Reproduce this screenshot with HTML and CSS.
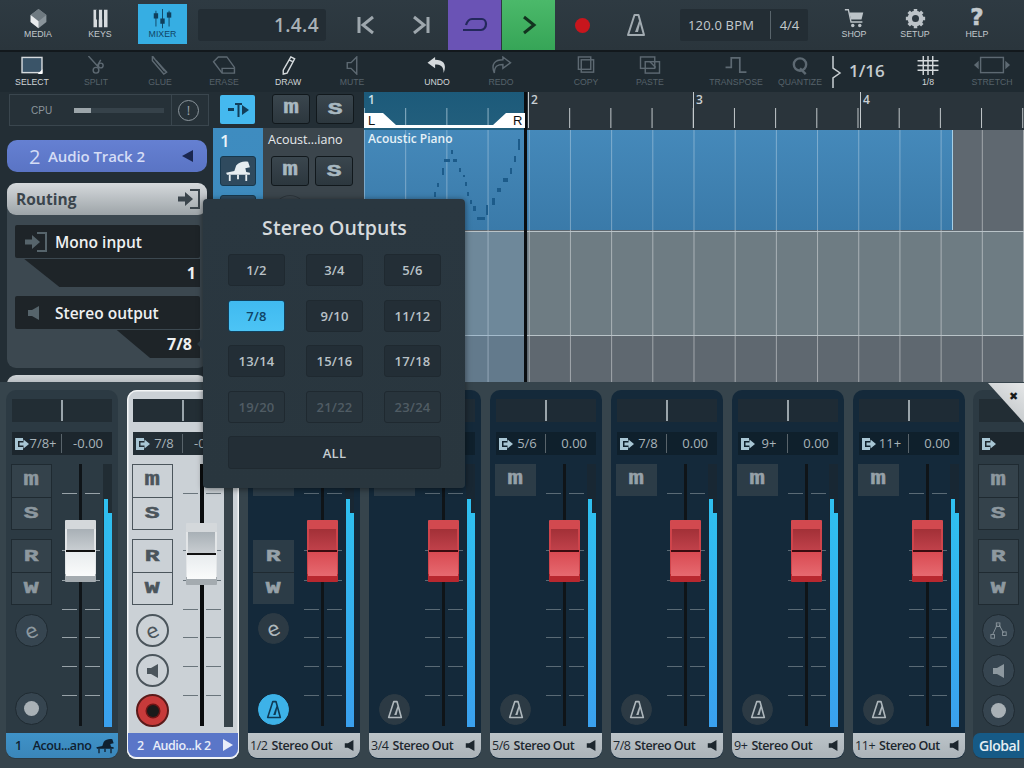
FILE: index.html
```html
<!DOCTYPE html>
<html lang="en">
<head>
<meta charset="utf-8">
<title>Mixer</title>
<link rel="stylesheet" href="styles.css">
</head>
<body>
<svg class="defs" width="0" height="0" aria-hidden="true">
  <symbol id="i-out" viewBox="0 0 15 14"><path d="M1 1h8v3H4v6h5v3H1z" fill="currentColor"/><path d="M5.500 5.500h4V2.500L15 7l-5.500 4.500v-3h-4z" fill="currentColor"/></symbol>
  <symbol id="i-in" viewBox="0 0 24 22"><path d="M13 2h9v18h-9" fill="none" stroke="currentColor" stroke-width="2"/><path d="M1 8.500h7V4l8 7-8 7v-4.500H1z" fill="currentColor"/></symbol>
  <symbol id="i-spk" viewBox="0 0 14 16"><path d="M1 5h4l7-4v14l-7-4H1z" fill="currentColor"/></symbol>
  <symbol id="i-piano" viewBox="0 0 30 24"><path d="M2 14l9-2 2-6c3-4 9-5 13-4l2 6-5 1 1 4 4 1v2H3z" fill="currentColor"/><path d="M5 16h2v7H5zM23 16h2v7h-2zM14 16h2v5h-2z" fill="currentColor"/></symbol>
  <symbol id="i-metro" viewBox="0 0 20 24"><path d="M8.500 2h4l5.500 20H2z" fill="none" stroke="currentColor" stroke-width="2" stroke-linejoin="round"/><path d="M9 19l4-11 1.500.5L12 19z" fill="currentColor"/></symbol>
  <symbol id="i-ticks" viewBox="0 0 41 262"><g stroke="currentColor" stroke-width="1"><path d="M2 29.500h15M25 29.500h15M2 86.500h15M25 86.500h15M2 116.500h15M25 116.500h15M2 145.500h15M25 145.500h15M2 173.500h15M25 173.500h15M2 202.500h15M25 202.500h15M2 231.500h15M25 231.500h15"/></g></symbol>
</svg>

<div class="app">
  <header class="topbar">
    <div class="tb-btn w-media"><svg class="ic" viewBox="0 0 24 24"><path d="M12 1l9 7v8l-9 7-9-7V8z" fill="#8a949b"/><path d="M3 8l9 7 9-7-9-7z" fill="#6f7a81"/><path d="M3 8v8l9 7v-8z" fill="#e8ebed"/></svg><span>MEDIA</span></div>
    <div class="tb-btn w-keys"><svg class="ic" viewBox="0 0 24 24"><path d="M4 2h4v20H4zM10 2h4v20h-4zM16 2h4v20h-4z" fill="#d7dbde"/><path d="M7 2h3v11H7zM14 2h2v11h-2z" fill="#2c3840"/></svg><span>KEYS</span></div>
    <div class="tb-btn mixer-on"><svg class="ic" viewBox="0 0 24 24" fill="#0f3f5c"><path d="M4 3h1v18H4zM11.500 1h1v22h-1zM19 3h1v18h-1z"/><rect x="2" y="6" width="5" height="6"/><rect x="9.500" y="12" width="5" height="6"/><rect x="17" y="5" width="5" height="6"/></svg><span>MIXER</span></div>
    <div class="display">1.4.4</div>
    <div class="tp w-prev"><svg viewBox="0 0 20 20" width="20" height="20"><path d="M3 2v16M17 2L7 10l10 8" fill="none" stroke="#9ea7ad" stroke-width="3"/></svg></div>
    <div class="tp w-next"><svg viewBox="0 0 20 20" width="20" height="20"><path d="M17 2v16M3 2l10 8-10 8" fill="none" stroke="#9ea7ad" stroke-width="3"/></svg></div>
    <div class="tp loop"><svg viewBox="0 0 26 16" width="26" height="16"><path d="M4 8c1-3 3-6 6-6h10c2 0 4 2 4 5s-2 6-5 6H1" fill="none" stroke="#23285c" stroke-width="2.200"/></svg></div>
    <div class="tp play"><svg viewBox="0 0 16 20" width="16" height="22"><path d="M3 2l10 8-10 8" fill="none" stroke="#12331f" stroke-width="3"/></svg></div>
    <div class="tp w-rec"><span class="recdot"></span></div>
    <div class="tp w-met"><svg class="met" width="20" height="24"><use href="#i-metro"/></svg></div>
    <div class="bpm"><span class="bpm-v">120.0 BPM</span><span class="bpm-s">4/4</span></div>
    <div class="tb-btn w-shop"><svg class="ic" viewBox="0 0 24 24"><path d="M1 2h4l3 14h13" fill="none" stroke="#bcc3c8" stroke-width="1.500"/><path d="M6 5h16l-2 8H8z" fill="#bcc3c8"/><circle cx="10" cy="20" r="2" fill="#bcc3c8"/><circle cx="18" cy="20" r="2" fill="#bcc3c8"/></svg><span>SHOP</span></div>
    <div class="tb-btn w-setup"><svg class="ic" viewBox="0 0 24 24"><circle cx="12" cy="12" r="6.500" fill="none" stroke="#bcc3c8" stroke-width="5"/><path d="M12 1v22M1 12h22M4.200 4.200l15.600 15.600M19.800 4.200L4.200 19.800" stroke="#bcc3c8" stroke-width="4" stroke-dasharray="4 14"/></svg><span>SETUP</span></div>
    <div class="tb-btn w-help"><span class="q">?</span><span>HELP</span></div>
  </header>

  <nav class="toolbar">
    <div class="tool on"><svg viewBox="0 0 24 20"><rect x="1.500" y="1.500" width="21" height="16" fill="#3a5468" stroke="#d5dadd" stroke-width="1.500"/><path d="M23 14v5h-5z" fill="#fff"/></svg><span>SELECT</span></div>
    <div class="tool"><svg viewBox="0 0 24 20" fill="none" stroke="#5d6972" stroke-width="1.500"><path d="M4 0l11 12M17 4l-4 7"/><circle cx="12" cy="15" r="3"/><circle cx="17" cy="10" r="2.500"/></svg><span>SPLIT</span></div>
    <div class="tool"><svg viewBox="0 0 24 20" fill="none" stroke="#5d6972" stroke-width="1.500"><path d="M4 0l3 4 12 13-3 2L4 5z"/><path d="M8 5l9 11"/></svg><span>GLUE</span></div>
    <div class="tool"><svg viewBox="0 0 24 20" fill="none" stroke="#5d6972" stroke-width="1.500"><path d="M1 6l5-5h9l8 11v6H10z"/><path d="M10 18v-5h13"/></svg><span>ERASE</span></div>
    <div class="tool on"><svg viewBox="0 0 24 20" fill="none" stroke="#d5dadd" stroke-width="1.500"><path d="M15 1l4 2-8 15-4 1v-4z"/><path d="M13 4l4 2"/></svg><span>DRAW</span></div>
    <div class="tool"><svg viewBox="0 0 24 20" fill="none" stroke="#5d6972" stroke-width="1.500"><path d="M7 7h4l6-6v18l-6-6H7z"/></svg><span>MUTE</span></div>
    <div class="tool m-undo on"><svg viewBox="0 0 24 20"><path d="M10 1L2 7l8 6V9c5 0 9 1 9 9 4-10-1-14-9-14z" fill="#d5dadd"/></svg><span>UNDO</span></div>
    <div class="tool"><svg viewBox="0 0 24 20"><path d="M14 1l8 6-8 6V9c-5 0-9 1-9 9C1 8 6 4 14 4z" fill="none" stroke="#5d6972" stroke-width="1.500"/></svg><span>REDO</span></div>
    <div class="tool m-copy"><svg viewBox="0 0 24 20" fill="none" stroke="#5d6972" stroke-width="1.500"><rect x="4" y="1" width="13" height="13"/><rect x="7" y="4" width="13" height="13"/></svg><span>COPY</span></div>
    <div class="tool"><svg viewBox="0 0 24 20" fill="none" stroke="#5d6972" stroke-width="1.500"><rect x="2" y="1" width="15" height="12"/><rect x="7" y="6" width="15" height="12"/><path d="M12 6l6 6"/></svg><span>PASTE</span></div>
    <div class="tool m-trans"><svg viewBox="0 0 24 20" fill="none" stroke="#5d6972" stroke-width="1.800"><path d="M1 12h6V2h9v15h7"/></svg><span>TRANSPOSE</span></div>
    <div class="tool"><svg viewBox="0 0 24 20" fill="none" stroke="#5d6972" stroke-width="2.500"><circle cx="12" cy="9" r="6.500"/><path d="M12 13l6 6"/></svg><span>QUANTIZE</span></div>
    <svg class="brace" viewBox="0 0 10 32" width="10" height="32"><path d="M1 0v12l7 5-7 5v10" fill="none" stroke="#c9cfd3" stroke-width="1.500"/></svg>
    <div class="snap">1/16</div>
    <div class="tool on m-grid"><svg viewBox="0 0 24 20" fill="none" stroke="#d5dadd" stroke-width="1.500"><path d="M7 0v20M12 0v20M17 0v20M1 5h22M1 10h22M1 15h22"/></svg><span>1/8</span></div>
    <div class="tool"><svg viewBox="0 0 38 20"><rect x="7" y="1.500" width="24" height="16" fill="none" stroke="#5d6972" stroke-width="1.500"/><path d="M5 5v9L0 9.500zM33 5v9l5-4.500z" fill="#5d6972"/></svg><span>STRETCH</span></div>
  </nav>

  <main class="work">
    <aside class="insp">
      <div class="cpu"><span class="cpu-l">CPU</span><span class="cpu-b"><i></i></span><span class="cpu-d"></span><span class="cpu-w">!</span></div>
      <div class="trackpill"><span class="tp-n">2</span><span class="tp-t">Audio Track 2</span><span class="tp-a"></span></div>
      <section class="panel">
        <div class="panel-h"><span>Routing</span><svg width="24" height="22"><use href="#i-in"/></svg></div>
        <div class="rt-row"><svg class="rt-ic" width="24" height="22"><use href="#i-in"/></svg><span>Mono input</span></div>
        <div class="rt-sub rt-a">1</div>
        <div class="rt-row r2"><svg class="rt-ic sp" width="14" height="16"><use href="#i-spk"/></svg><span>Stereo output</span></div>
        <div class="rt-sub rt-b">7/8</div>
      </section>
      <div class="panel-next"></div>
    </aside>

    <section class="trk">
      <div class="trk-top">
        <div class="btn-blue"><svg viewBox="0 0 24 20" width="26" height="20"><path d="M2 8h6v3H2zM11.500 4h2v13h-2zM9 3h7v2H9z" fill="#123e5a"/><path d="M16 5l7 5-7 5z" fill="#123e5a"/></svg></div>
        <div class="btn-dk l1"><span class="gm">m</span></div>
        <div class="btn-dk"><span>S</span></div>
      </div>
      <div class="trk-row">
        <div class="trk-num"><span>1</span><div class="btn-ins"><svg width="28" height="22"><use href="#i-piano"/></svg></div><div class="btn-ins off"></div></div>
        <div class="trk-main"><span class="trk-name">Acoust...iano</span><div class="trk-ms"><div class="btn-dk"><span class="gm">m</span></div><div class="btn-dk"><span>S</span></div></div><div class="trk-knob"></div></div>
      </div>
    </section>

    <section class="arr">
      <div class="ruler">
        <div class="ruler-sel"><span class="bar b1">1</span>
          <svg class="loc" viewBox="0 0 161 16" width="161" height="16"><path d="M0 1h19l13 12h97l13-12h19v15H0z" fill="#fff"/><text x="4" y="13" class="loc-t">L</text><text x="149" y="13" class="loc-t">R</text></svg>
        </div>
        <div class="ruler-rest"><span class="bar b2">2</span><span class="bar b3">3</span><span class="bar b4">4</span></div>
      </div>
      <div class="lanes">
        <div class="lane l-a"><div class="clip"><span>Acoustic Piano</span>
          <svg class="notes" viewBox="0 0 160 100" width="160" height="100"><g fill="#1c5b8a"><rect x="87" y="20" width="2" height="4"/><rect x="80" y="29" width="6" height="3"/><rect x="89" y="29" width="4" height="3"/><rect x="78" y="38" width="2" height="7"/><rect x="73" y="53" width="2" height="4"/><rect x="70" y="62" width="2" height="5"/><rect x="95" y="38" width="2" height="4"/><rect x="99" y="45" width="2" height="2"/><rect x="101" y="52" width="2" height="4"/><rect x="103" y="62" width="2" height="4"/><rect x="106" y="70" width="2" height="4"/><rect x="109" y="76" width="3" height="5"/><rect x="113" y="87" width="8" height="3"/><rect x="122" y="75" width="2" height="10"/><rect x="128" y="68" width="3" height="7"/><rect x="133" y="58" width="4" height="4"/><rect x="139" y="48" width="5" height="4"/><rect x="146" y="38" width="2" height="6"/><rect x="150" y="26" width="2" height="6"/><rect x="154" y="9" width="2" height="11"/></g></svg>
        </div></div>
        <div class="lane l-b"></div>
        <div class="lane l-c"></div>
        <div class="sel-tint"></div>
      </div>
      <div class="playhead"></div>
    </section>
  </main>

  <section class="mixer">
    <article class="ch dark">
      <div class="pan"><i></i></div>
      <div class="route"><svg width="15" height="14"><use href="#i-out"/></svg><span class="rn">7/8+</span><span class="rv">-0.00</span></div>
      <div class="body">
        <div class="ctl">
          <div class="grp"><div class="k"><span class="gm">m</span></div><div class="k"><span>S</span></div></div>
          <div class="grp"><div class="k"><span>R</span></div><div class="k"><span>W</span></div></div>
          <div class="rnd"><em>e</em></div>
          <div class="rnd last"><i class="dot"></i></div>
        </div>
        <div class="strip"><svg class="ticks" width="41" height="262"><use href="#i-ticks"/></svg><i class="rail"></i><div class="cap"></div></div>
        <div class="meter"><i class="m1"></i><i class="m2"></i></div>
      </div>
      <div class="foot f-blue"><b>1</b><span>Acou...ano</span><svg width="20" height="16"><use href="#i-piano"/></svg></div>
    </article>

    <article class="ch sel">
      <div class="pan"><i></i></div>
      <div class="route"><svg width="15" height="14"><use href="#i-out"/></svg><span class="rn">7/8</span><span class="rv">-0.00</span></div>
      <div class="body">
        <div class="ctl">
          <div class="grp"><div class="k"><span class="gm">m</span></div><div class="k"><span>S</span></div></div>
          <div class="grp"><div class="k"><span>R</span></div><div class="k"><span>W</span></div></div>
          <div class="rnd"><em>e</em></div>
          <div class="rnd"><svg width="14" height="16"><use href="#i-spk"/></svg></div>
          <div class="rnd rec"><i class="dot"></i></div>
        </div>
        <div class="strip"><svg class="ticks" width="41" height="262"><use href="#i-ticks"/></svg><i class="rail"></i><div class="cap low"></div></div>
        <div class="meter"></div>
      </div>
      <div class="foot f-sel"><b>2</b><span>Audio...k 2</span><i class="tri"></i></div>
    </article>

    <article class="ch out">
      <div class="pan"><i></i></div>
      <div class="route"></div>
      <div class="body">
        <div class="ctl">
          <div class="grp flat"><div class="k"><span class="gm">m</span></div></div>
          <div class="grp flat rw"><div class="k"><span>R</span></div><div class="k"><span>W</span></div></div>
          <div class="rnd"><em>e</em></div>
          <div class="rnd last on"><svg width="16" height="19"><use href="#i-metro"/></svg></div>
        </div>
        <div class="strip"><svg class="ticks" width="41" height="262"><use href="#i-ticks"/></svg><i class="rail"></i><div class="cap red"></div></div>
        <div class="meter"><i class="m1"></i><i class="m2"></i></div>
      </div>
      <div class="foot f-grey"><b>1/2</b><span>Stereo Out</span><svg width="11" height="13"><use href="#i-spk"/></svg></div>
    </article>

    <article class="ch out">
      <div class="pan"><i></i></div>
      <div class="route"></div>
      <div class="body">
        <div class="ctl">
          <div class="grp flat"><div class="k"><span class="gm">m</span></div></div>
          <div class="rnd last"><svg width="16" height="19"><use href="#i-metro"/></svg></div>
        </div>
        <div class="strip"><svg class="ticks" width="41" height="262"><use href="#i-ticks"/></svg><i class="rail"></i><div class="cap red"></div></div>
        <div class="meter"><i class="m1"></i><i class="m2"></i></div>
      </div>
      <div class="foot f-grey"><b>3/4</b><span>Stereo Out</span><svg width="11" height="13"><use href="#i-spk"/></svg></div>
    </article>

    <article class="ch out">
      <div class="pan"><i></i></div>
      <div class="route"><svg width="15" height="14"><use href="#i-out"/></svg><span class="rn">5/6</span><span class="rv">0.00</span></div>
      <div class="body">
        <div class="ctl">
          <div class="grp flat"><div class="k"><span class="gm">m</span></div></div>
          <div class="rnd last"><svg width="16" height="19"><use href="#i-metro"/></svg></div>
        </div>
        <div class="strip"><svg class="ticks" width="41" height="262"><use href="#i-ticks"/></svg><i class="rail"></i><div class="cap red"></div></div>
        <div class="meter"><i class="m1"></i><i class="m2"></i></div>
      </div>
      <div class="foot f-grey"><b>5/6</b><span>Stereo Out</span><svg width="11" height="13"><use href="#i-spk"/></svg></div>
    </article>

    <article class="ch out">
      <div class="pan"><i></i></div>
      <div class="route"><svg width="15" height="14"><use href="#i-out"/></svg><span class="rn">7/8</span><span class="rv">0.00</span></div>
      <div class="body">
        <div class="ctl">
          <div class="grp flat"><div class="k"><span class="gm">m</span></div></div>
          <div class="rnd last"><svg width="16" height="19"><use href="#i-metro"/></svg></div>
        </div>
        <div class="strip"><svg class="ticks" width="41" height="262"><use href="#i-ticks"/></svg><i class="rail"></i><div class="cap red"></div></div>
        <div class="meter"><i class="m1"></i><i class="m2"></i></div>
      </div>
      <div class="foot f-grey"><b>7/8</b><span>Stereo Out</span><svg width="11" height="13"><use href="#i-spk"/></svg></div>
    </article>

    <article class="ch out">
      <div class="pan"><i></i></div>
      <div class="route"><svg width="15" height="14"><use href="#i-out"/></svg><span class="rn">9+</span><span class="rv">0.00</span></div>
      <div class="body">
        <div class="ctl">
          <div class="grp flat"><div class="k"><span class="gm">m</span></div></div>
          <div class="rnd last"><svg width="16" height="19"><use href="#i-metro"/></svg></div>
        </div>
        <div class="strip"><svg class="ticks" width="41" height="262"><use href="#i-ticks"/></svg><i class="rail"></i><div class="cap red"></div></div>
        <div class="meter"><i class="m1"></i><i class="m2"></i></div>
      </div>
      <div class="foot f-grey"><b>9+</b><span>Stereo Out</span><svg width="11" height="13"><use href="#i-spk"/></svg></div>
    </article>

    <article class="ch out">
      <div class="pan"><i></i></div>
      <div class="route"><svg width="15" height="14"><use href="#i-out"/></svg><span class="rn">11+</span><span class="rv">0.00</span></div>
      <div class="body">
        <div class="ctl">
          <div class="grp flat"><div class="k"><span class="gm">m</span></div></div>
          <div class="rnd last"><svg width="16" height="19"><use href="#i-metro"/></svg></div>
        </div>
        <div class="strip"><svg class="ticks" width="41" height="262"><use href="#i-ticks"/></svg><i class="rail"></i><div class="cap red"></div></div>
        <div class="meter"><i class="m1"></i><i class="m2"></i></div>
      </div>
      <div class="foot f-grey"><b>11+</b><span>Stereo Out</span><svg width="11" height="13"><use href="#i-spk"/></svg></div>
    </article>

    <article class="ch dark global">
      <div class="pan"><i></i></div>
      <div class="route"><svg width="15" height="14"><use href="#i-out"/></svg></div>
      <div class="body">
        <div class="ctl">
          <div class="grp"><div class="k"><span class="gm">m</span></div><div class="k"><span>S</span></div></div>
          <div class="grp"><div class="k"><span>R</span></div><div class="k"><span>W</span></div></div>
          <div class="rnd"><svg viewBox="0 0 20 20" width="18" height="18"><path d="M8 3L3 14M10 3l5 9" fill="none" stroke="currentColor"/><rect x="7" y="1" width="4" height="4" fill="none" stroke="currentColor"/><rect x="1" y="14" width="4" height="4" fill="none" stroke="currentColor"/><rect x="14" y="11" width="4" height="4" fill="none" stroke="currentColor"/></svg></div>
          <div class="rnd"><svg width="14" height="16"><use href="#i-spk"/></svg></div>
          <div class="rnd"><i class="dot"></i></div>
        </div>
      </div>
      <div class="foot f-global"><span>Global</span></div>
    </article>

    <div class="close-tab"><span>&#10006;</span></div>
  </section>

  <div class="popup">
    <h2>Stereo Outputs</h2>
    <div class="po-grid">
      <div class="po">1/2</div><div class="po">3/4</div><div class="po">5/6</div>
      <div class="po act">7/8</div><div class="po">9/10</div><div class="po">11/12</div>
      <div class="po">13/14</div><div class="po">15/16</div><div class="po">17/18</div>
      <div class="po dis">19/20</div><div class="po dis">21/22</div><div class="po dis">23/24</div>
      <div class="po all">ALL</div>
    </div>
  </div>
</div>
</body>
</html>
```

FILE: styles.css
```css
* { box-sizing: border-box; }
html, body { margin: 0; padding: 0; }
body { width: 1024px; height: 768px; overflow: hidden; background: #2b363d; font-family: "Open Sans", sans-serif; }
.defs { position: absolute; }
.app { position: relative; width: 1024px; height: 768px; display: flex; flex-direction: column; overflow: hidden; }

/* top bar */
.topbar { height: 52px; flex: none; display: flex; align-items: flex-start; background: linear-gradient(#2e3a42, #2a353c); border-bottom: 2px solid #12181c; }
.tb-btn { display: flex; flex-direction: column; align-items: center; height: 50px; padding-top: 8px; font: 8.800px "Liberation Sans", sans-serif; color: #c2c9cd; }
.tb-btn .ic { width: 21px; height: 21px; flex: none; }
.tb-btn span { line-height: 11px; }
.w-media { width: 76px; }
.w-keys { width: 48px; margin-right: 14px; }
.mixer-on { width: 49px; height: 40px; margin: 4px 11px 0 0; padding-top: 4px; background: #36aee3; color: #0f4566; }
.display { width: 128px; height: 32px; margin-top: 9px; padding-right: 7px; background: #232d34; border-radius: 3px; text-align: right; font-size: 19px; font-weight: 600; line-height: 32px; color: #a9b1b6; letter-spacing: .4px; }
.tp { height: 50px; display: flex; align-items: center; justify-content: center; flex: none; }
.w-prev { width: 54px; margin-left: 13px; }
.w-next { width: 55px; }
.loop { width: 53px; margin-right: 1px; background: #6a53b5; }
.play { width: 53px; background: linear-gradient(#4bb96a, #36a557); }
.w-rec { width: 54px; }
.recdot { width: 15px; height: 15px; border-radius: 50%; background: #c8161d; }
.w-met { width: 54px; }
.met { color: #a2abb1; }
.bpm { width: 128px; height: 32px; margin: 9px 17px 0; display: flex; align-items: center; background: #232d34; border-radius: 2px; font-size: 13px; font-weight: 500; color: #c3cacd; }
.bpm-v { width: 90px; padding-right: 8px; text-align: center; letter-spacing: .2px; white-space: nowrap; }
.bpm-s { flex: 1; text-align: center; border-left: 1px solid #59646b; line-height: 28px; }
.w-shop { width: 60px; margin-left: -1px; }
.w-setup { width: 62px; }
.w-help { width: 62px; padding-top: 5px; }
.tb-btn .q { font: 700 23px/24px "DejaVu Sans", sans-serif; height: 24px; color: #c2c9cd; -webkit-text-stroke: .6px currentColor; }

/* tool bar */
.toolbar { height: 40px; flex: none; display: flex; background: #1f2a31; }
.tool { width: 64px; flex: none; display: flex; flex-direction: column; align-items: center; padding-top: 4px; font: 8.700px "Liberation Sans", sans-serif; color: #56626a; }
.tool svg { height: 19px; width: 24px; flex: none; margin-bottom: 2px; }
.tool span { line-height: 11px; white-space: nowrap; }
.tool.on { color: #d0d5d8; }
.tool:last-child svg { width: 38px; }
.m-undo { margin-left: 21px; }
.m-copy { margin-left: 21px; }
.m-trans { margin-left: 22px; }
.brace { flex: none; margin: 4px 0 0 0; }
.snap { width: 54px; flex: none; padding: 8px 0 0 7px; font-size: 17px; font-weight: 600; line-height: 22px; color: #c4cbcf; }
.m-grid { color: #c4cbcf; }

/* main */
.work { height: 290px; flex: none; display: flex; background: #232e35; overflow: hidden; }
.insp { width: 213px; flex: none; padding: 2px 6px 0 7px; display: flex; flex-direction: column; }
.cpu { height: 32px; flex: none; margin: 0 -2px 0 2px; display: flex; align-items: center; border: 1px solid #3a464e; background: #263138; }
.cpu-l { width: 64px; padding-left: 21px; font: 10px "Liberation Sans", sans-serif; color: #8b959c; }
.cpu-b { width: 90px; height: 5px; background: #36424a; }
.cpu-b i { display: block; width: 17px; height: 5px; background: #9ca5aa; }
.cpu-d { width: 1px; height: 30px; margin-left: 7px; background: #3a464e; }
.cpu-w { width: 21px; height: 21px; margin-left: 6px; border: 1.500px solid #8b959c; border-radius: 50%; text-align: center; font-size: 13px; line-height: 18px; color: #9aa3a8; }
.trackpill { height: 32px; flex: none; margin-top: 14px; display: flex; align-items: center; border-radius: 10px; background: linear-gradient(#6580d2, #5a74c4); padding-left: 22px; }
.tp-n { font-size: 20px; color: #d4dcf5; width: 19px; }
.tp-t { font-size: 15px; font-weight: 600; color: #d4dcf5; letter-spacing: -.1px; flex: 1; white-space: nowrap; }
.tp-a { width: 0; height: 0; margin-right: 14px; border: 6px solid transparent; border-left: 0; border-right: 11px solid #1a2750; }
.panel { height: 185px; margin-top: 11px; padding: 0 7px 0 8px; border-radius: 9px; background: #3c4850; flex: none; }
.panel-h { height: 32px; margin: 0 -7px 0 -8px; padding: 0 7px 0 9px; display: flex; align-items: center; justify-content: space-between; border-radius: 9px; background: linear-gradient(#d5d9dc, #9da4a8); color: #3b454c; font-size: 15.500px; font-weight: 700; }
.panel-h svg { margin-right: -1px; }
.rt-row { height: 33px; margin-top: 10px; display: flex; align-items: center; padding-left: 9px; background: #1e2428; border-radius: 2px; color: #eef0f1; font-size: 15.500px; font-weight: 600; white-space: nowrap; }
.rt-row span { margin-left: 7px; }
.rt-ic { color: #56646b; flex: none; }
.rt-ic.sp { margin: 0 7px 0 3px; }
.rt-row.r2 { margin-top: 9px; }
.rt-sub { height: 28px; margin-top: 1px; padding-right: 4px; text-align: right; background: #1e2428; color: #eef0f1; font-size: 16px; font-weight: 700; line-height: 29px; }
.rt-a { clip-path: polygon(5% 0, 100% 0, 100% 100%, 24% 100%); }
.rt-b { clip-path: polygon(55% 0, 100% 0, 100% 100%, 73% 100%); padding-right: 8px; }
.panel-next { height: 14px; margin-top: 7px; border-radius: 9px 9px 0 0; background: linear-gradient(#cdd2d5, #a8aeb2); flex: none; }

.trk { width: 151px; flex: none; display: flex; flex-direction: column; }
.trk-top { height: 36px; flex: none; display: flex; padding: 2px 0 0 7px; }
.btn-blue { width: 35px; height: 29px; margin-top: 1px; display: flex; align-items: center; justify-content: center; background: #45b9ef; border-radius: 2px; }
.btn-dk { width: 38px; height: 30px; margin-left: 6px; background: linear-gradient(#3a464e, #2c373e); border: 1.500px solid #11181c; border-radius: 3px; display: flex; align-items: center; justify-content: center; font: 700 17px/1 "Liberation Mono", monospace; color: #a8b8c0; }
.btn-dk span, .k span { display: inline-block; transform: scaleX(1.45); -webkit-text-stroke: .5px currentColor; }
.btn-dk .gm, .k .gm { font-size: 21px; transform: scaleX(1.22); margin-top: -4px; }
.btn-dk.l1 { margin-left: 17px; }
.trk-row { flex: 1; display: flex; }
.trk-num { width: 50px; flex: none; padding: 3px 0 0 7px; background: linear-gradient(#3e8cc0, #3d88b9); color: #e9f3f9; font-size: 17px; font-weight: 600; line-height: 20px; }
.trk-num span { display: block; height: 25px; }
.btn-ins { width: 36px; height: 30px; border-radius: 3px; border: 1.500px solid #17384d; background: #2f4a5e; color: #e6edf1; display: flex; align-items: center; justify-content: center; margin-bottom: 9px; }
.trk-main { flex: 1; padding-left: 2px; background: #3b454c; }
.trk-name { display: block; height: 28px; padding: 3px 0 0 3px; font-size: 12.500px; font-weight: 500; color: #e6eaec; line-height: 18px; white-space: nowrap; }
.trk-ms { display: flex; }
.trk-ms .btn-dk:first-child { margin-left: 6px; }
.trk-knob { width: 34px; height: 34px; margin: 9px 0 0 8px; border-radius: 50%; border: 1.500px solid #2c353b; }

.arr { position: relative; width: 660px; flex: none; }
.ruler { height: 38px; display: flex; background: #2a343b; }
.ruler-sel { position: relative; width: 161px; flex: none; background: linear-gradient(#1c5a7a, #235f7d); }
.ruler-rest { position: relative; flex: 1; }
.ruler-rest::before, .ruler-sel::before { content: ""; position: absolute; left: 0; right: 0; bottom: 2px; height: 20px; background-size: 41.200px 100%; }
.ruler-sel::before { background-image: linear-gradient(90deg, #8fb3c6 1px, transparent 1px); }
.ruler-rest::before { left: 3px; background-image: linear-gradient(90deg, #c4cacd 1px, transparent 1px); }
.bar { position: absolute; top: 0; font: 600 12px/16px "Open Sans", sans-serif; color: #c9d0d4; }
.bar::after { content: ""; position: absolute; top: 0; left: -3px; width: 1px; height: 36px; background: #c4cacd; }
.b1::after { display: none; }
.b1 { left: 4px; color: #cfe0ea; }
.b2 { left: 6px; }
.b3 { left: 171px; }
.b4 { left: 338px; }
.loc { position: absolute; left: 0; bottom: 2px; z-index: 1; }
.loc-t { font: 13px "Liberation Sans", sans-serif; fill: #111; }
.lanes { position: relative; height: 252px; }
.lane { background-size: 41.200px 100%; background-image: linear-gradient(90deg, rgba(255,255,255,.42) 1px, transparent 1px); }
.l-a { height: 102px; background-color: #5f6870; border-bottom: 1px solid #b9c3c8; }
.l-b { height: 104px; background-color: #6e7c83; border-bottom: 1px solid #b9c3c8; }
.l-c { height: 46px; background-color: #5f6870; }
.clip { position: relative; width: 589px; height: 100px; background-image: linear-gradient(90deg, rgba(255,255,255,.32) 1px, transparent 1px), linear-gradient(#4589ba, #3a7aa9); background-size: 41.200px 100%, 100% 100%; border-right: 1px solid #a8cfe5; }
.clip span { display: block; padding: 1px 0 0 4px; font-size: 12px; font-weight: 600; color: #e6f1f7; line-height: 16px; }
.notes { position: absolute; left: 0; top: 0; }
.sel-tint { position: absolute; left: 0; top: 102px; width: 161px; height: 150px; background: rgba(110, 170, 215, .28); }
.playhead { position: absolute; left: 160px; top: 0; width: 3px; height: 290px; background: #0a0d10; }

/* mixer */
.mixer { position: relative; height: 386px; flex: none; display: flex; gap: 9px; padding: 8px 0 0 6px; background: #36444c; overflow: hidden; }
.ch { width: 112px; height: 369px; flex: none; padding: 9px 0 0; border-radius: 10px 10px 9px 9px; display: flex; flex-direction: column; }
.dark { background: #2c3a43; }
.sel { background: #cbd1d6; box-shadow: inset 0 0 0 1.500px #f3f5f6; }
.out { background: #14293a; }
.global { width: 60px; margin-left: -1px; }
.pan { height: 23px; margin: 0 6px; flex: none; background: #222d34; position: relative; }
.pan i { position: absolute; left: 49px; top: 1px; width: 1.500px; height: 21px; background: #9aa5ab; }
.route { height: 23px; margin: 10px 6px 0; flex: none; display: flex; align-items: center; background: #1c262d; color: #a8b3b9; font-size: 13px; white-space: nowrap; overflow: hidden; }
.route svg { flex: none; margin: 0 0 0 2px; color: #a8c6d4; }
.rn { width: 32px; padding-right: 4px; text-align: center; flex: none; line-height: 19px; }
.rv { flex: 1; border-left: 1.500px solid #59646b; padding-right: 9px; text-align: right; line-height: 19px; }
.out .pan { background: #1e2b35; }
.out .route { background: #0f202c; }
.sel .pan { background: #232e35; }
.sel .route { background: #232e35; }
.body { height: 262px; margin-top: 9px; flex: none; display: flex; padding-left: 5px; }
.ctl { width: 41px; flex: none; display: flex; flex-direction: column; align-items: center; margin-right: 8px; }
.grp { width: 41px; flex: none; border: 1px solid #1f2a31; margin-bottom: 9px; }
.k { height: 32px; display: flex; align-items: center; justify-content: center; background: #34424b; color: #8d989f; font: 700 17px/1 "Liberation Mono", monospace; }
.k + .k { border-top: 1px solid #1f2a31; }
.grp.flat { border: 0; }
.grp.flat .k { background: #2c3c47; color: #96a1a8; }
.grp.rw { margin-top: 35px; }
.sel .grp { border: 1.500px solid #4b555c; }
.sel .k { background: #cbd1d6; color: #4b555c; }
.sel .k + .k { border-top: 1.500px solid #4b555c; }
.rnd { width: 33px; height: 33px; flex: none; margin-bottom: 7px; border-radius: 50%; display: flex; align-items: center; justify-content: center; background: #364550; border: 1.500px solid #1f2a31; color: #8d989f; }
.rnd em { display: inline-block; font: 20px/1 "DejaVu Sans", sans-serif; transform: rotate(-25deg); }
.rnd.last { margin-top: auto; margin-bottom: 0; position: relative; top: -1px; }
.rnd .dot { width: 15px; height: 15px; border-radius: 50%; background: #a9b1b6; }
.out .rnd { width: 31px; height: 31px; background: #2c3a44; border-color: #2c3a44; color: #aeb7bc; }
.out .rnd.on { background: #3db2e8; border-color: #3db2e8; color: #0f3a55; }
.sel .rnd { background: transparent; border: 2px solid #4b555c; color: #4b555c; }
.sel .rnd.rec { background: #c73a3a; border-color: #5a1a1a; }
.sel .rnd.rec .dot { background: #1a1a1a; box-shadow: 0 0 0 1.500px #6d1515; width: 12px; height: 12px; }
.strip { position: relative; width: 41px; flex: none; display: flex; justify-content: center; margin-right: 2px; }
.ticks { position: absolute; left: 0; top: 0; color: #98a2a8; }
.sel .ticks { color: #6a757c; }
.out .ticks { color: #5a6a75; }
.rail { width: 3px; height: 262px; background: #0f1418; }
.sel .rail { background: #0a0c0e; width: 4px; }

.cap { position: absolute; left: 5px; top: 56px; width: 31px; height: 62px; border-radius: 1px; background: linear-gradient(#d4d8db 0 9px, #e2e5e7 9px 54px, #a4abb0 54px); }
.cap::before { content: ""; position: absolute; left: 2px; right: 2px; top: 9px; height: 21px; background: linear-gradient(#a8b0b6, #c8cdd1); }
.cap::after { content: ""; position: absolute; left: 1px; right: 1px; top: 30px; height: 24px; border-top: 2px solid #111; background: linear-gradient(#e8ecee, #fafbfb); }
.cap.low { top: 59px; }
.cap.red { background: linear-gradient(#d2494f 0 9px, #cf444b 9px 54px, #b8282f 54px); }
.cap.red::before { background: linear-gradient(#a23037, #c0414a); }
.cap.red::after { border-top-color: #3b0c10; background: linear-gradient(#d94a52, #e66a70); }

.meter { position: relative; width: 9px; height: 263px; flex: none; background: #212c33; }
.out .meter { background: #182733; }
.sel .meter { background: #37434a; }
.meter i { position: absolute; bottom: 0; width: 3.500px; }
.m1 { left: 1px; top: 35px; background: linear-gradient(#2fc0f0, #3aa0ee); }
.m2 { left: 5px; top: 49px; background: linear-gradient(#2fc0f0, #3aa0ee); }
.foot { height: 25px; margin-top: 7px; flex: none; display: flex; align-items: center; border-radius: 0 0 9px 9px; padding: 0 3px 0 6px; font-size: 12.500px; font-weight: 600; letter-spacing: -.45px; white-space: nowrap; }
.foot svg { flex: none; margin-left: auto; }
.foot b { font-weight: 600; margin-right: 7px; }
.f-blue { background: linear-gradient(#3f92c8, #3a86b9); color: #0f2030; }
.f-blue b { margin: 0 11px 0 3px; }
.f-sel { background: #5a76c8; color: #e8edf9; border: 1.500px solid #f3f5f6; border-top: 0; }
.f-sel b { margin: 0 9px 0 3px; }
.tri { width: 0; height: 0; margin-left: auto; margin-right: 2px; border: 6px solid transparent; border-right: 0; border-left: 10px solid #e8edf9; }
.f-grey { background: linear-gradient(#bcc4c9, #abb3b8); color: #1d272e; padding-left: 2px; }
.f-grey b { font-weight: 500; margin-right: 4px; }
.f-grey svg { margin-right: 2px; }
.f-global { background: #165a86; color: #e6eef3; font-size: 14px; padding-left: 6px; border-radius: 7px 0 0 9px; }
.close-tab { position: absolute; right: 0; top: 1px; width: 36px; height: 40px; clip-path: polygon(0 0, 100% 0, 100% 100%); background: linear-gradient(215deg, #e5e7e8, #b8bdc0); font-size: 11px; color: #1a1a1a; text-align: right; padding: 5px 6px 0 0; }

/* popup */
.popup { position: absolute; left: 203px; top: 199px; width: 262px; height: 289px; padding: 15px 24px 0 25px; background: linear-gradient(#2a3740, #29363e); border-radius: 4px; box-shadow: 0 1px 6px rgba(0,0,0,.5); }
.popup::before { content: ""; position: absolute; left: -6px; top: 139px; border: 6px solid transparent; border-left: 0; border-right: 6px solid #2a3740; }
.popup h2 { margin: 0 0 12px; height: 28px; text-align: center; font-size: 19.500px; font-weight: 600; line-height: 28px; letter-spacing: .1px; color: #d5dadd; }
.po-grid { display: grid; grid-template-columns: repeat(3, 57px); grid-auto-rows: 32px; column-gap: 21px; row-gap: 13.500px; }
.po { display: flex; align-items: center; justify-content: center; background: #232e36; border-radius: 3px; border: 1px solid #1f2930; font-size: 13px; font-weight: 600; color: #b9c1c6; letter-spacing: .2px; }
.po.act { background: linear-gradient(#40baf0, #4cc4f5); border-color: #12405c; color: #0f4466; }
.po.dis { color: #505c64; background: #28343c; }
.po.all { grid-column: 1 / span 3; height: 33px; color: #c6cdd1; }
```
